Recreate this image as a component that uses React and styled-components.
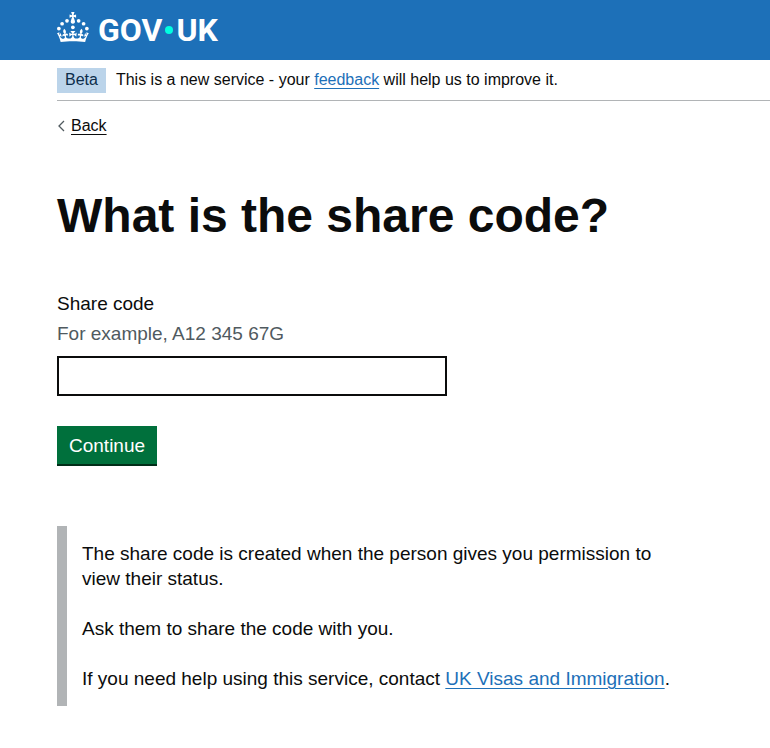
import React, { useState } from "react";
import styled, { createGlobalStyle } from "styled-components";

const GlobalStyle = createGlobalStyle`
  * {
    box-sizing: border-box;
  }

  body {
    margin: 0;
    background-color: #ffffff;
    color: #0b0c0c;
    font-family: "Liberation Sans", Arial, sans-serif;
    font-size: 19px;
    line-height: 25px;
  }
`;

const Header = styled.header`
  display: flex;
  background-color: #1d70b8;
  padding: 12px 57px 18px;
`;

const HomeLink = styled.a`
  display: flex;
  align-items: center;
  height: 30px;
  color: white;
  text-decoration: none;
`;

const Crown = styled.svg`
  width: 32px;
  height: 30px;
  margin-right: 9px;
  fill: currentColor;
`;

const LogoText = styled.span`
  font-family: Roboto, "Liberation Sans", sans-serif;
  font-size: 32px;
  font-weight: 700;
  line-height: 36px;
  padding-top: 6px;
`;

const LogoDot = styled.span`
  width: 8px;
  height: 8px;
  margin: 6px 3px 0;
  border-radius: 50%;
  background-color: #00ffe0;
`;

const Container = styled.div`
  padding-left: 57px;
`;

const PhaseBanner = styled.div`
  display: flex;
  align-items: flex-start;
  padding: 8px 0 7px;
  border-bottom: 1px solid #b1b4b6;
  font-size: 16px;
  line-height: 23px;
`;

const Tag = styled.strong`
  padding: 0 8px 2px;
  margin-right: 10px;
  background-color: #bbd4ea;
  color: #0c2d4a;
  font-weight: 400;
`;

const Link = styled.a`
  color: #1d70b8;
  text-decoration: underline;
  text-decoration-thickness: 1px;
  text-underline-offset: 3px;
`;

const BackLink = styled.a`
  display: inline-flex;
  align-items: center;
  margin-top: 12px;
  color: #0b0c0c;
  font-size: 16px;
  text-decoration: none;
`;

const Chevron = styled.svg`
  width: 8px;
  height: 12px;
  margin-right: 6px;
  fill: none;
  stroke: #505a5f;
  stroke-width: 1.3;
`;

const BackText = styled.span`
  text-decoration: underline;
  text-decoration-thickness: 1px;
  text-underline-offset: 3px;
`;

const Main = styled.main`
  max-width: 630px;
  padding: 53px 0 40px;
`;

const Title = styled.h1`
  margin: 0 0 50px;
  font-size: 48px;
  font-weight: 700;
  line-height: 50px;
`;

const Label = styled.label`
  display: block;
  margin-bottom: 5px;
`;

const Hint = styled.div`
  margin-bottom: 10px;
  color: #505a5f;
`;

const Input = styled.input`
  display: block;
  width: 100%;
  max-width: 390px;
  height: 40px;
  margin-bottom: 30px;
  padding: 5px;
  border: 2px solid #0b0c0c;
  border-radius: 0;
  font: inherit;
`;

const Button = styled.button`
  display: block;
  height: 38px;
  padding: 0 12px;
  border: none;
  background-color: #00703c;
  box-shadow: 0 2px 0 #002d18;
  color: white;
  font: inherit;
  cursor: pointer;
`;

const InsetText = styled.div`
  margin-top: 62px;
  padding: 15px;
  border-left: 10px solid #b1b4b6;
`;

const Paragraph = styled.p`
  margin: 0;

  & + & {
    margin-top: 25px;
  }
`;

const Logo = () => (
  <HomeLink href="#" aria-label="GOV.UK">
    <Crown viewBox="0 0 64 60" aria-hidden="true">
      <circle cx="20" cy="17.6" r="3.7" />
      <circle cx="10.2" cy="23.5" r="3.7" />
      <circle cx="3.7" cy="33.2" r="3.7" />
      <circle cx="31.7" cy="30.6" r="3.7" />
      <circle cx="43.3" cy="17.6" r="3.7" />
      <circle cx="53.2" cy="23.5" r="3.7" />
      <circle cx="59.7" cy="33.2" r="3.7" />
      <path d="M33.1,9.8c.2-.1.3-.3.5-.5l4.6,2.4v-6.8l-4.6,1.5c-.1-.2-.3-.3-.5-.5l1.9-5.9h-6.7l1.9,5.9c-.2.1-.3.3-.5.5l-4.6-1.5v6.8l4.6-2.4c.1.2.3.3.5.5l-2.6,8c-.9,2.8,1.2,5.7,4.1,5.7h0c3,0,5.1-2.9,4.1-5.7l-2.6-8ZM37,37.9s-3.4,3.8-4.1,6.1c2.2,0,4.2-.5,6.4-2.8l-.7,8.5c-2-2.8-4.4-4.1-5.7-3.8.1,3.1.5,6.7,5.8,7.2,3.7.3,6.7-1.5,7-3.8.4-2.6-2-4.3-3.7-1.6-1.4-4.5,2.4-6.1,4.9-3.2-1.9-4.5-1.8-7.7,2.4-10.9,3,4,2.6,7.3-1.2,11.1,2.4-1.3,6.2,0,4,4.6-1.2-2.8-3.7-2.2-4.2.2-.3,1.7.7,3.7,3,4.2,1.9.3,4.7-.9,7-5.9-1.3,0-2.4.7-3.9,1.7l2.4-8c.6,2.3,1.4,3.7,2.2,4.5.6-1.6.5-2.8,0-5.3l5,1.8c-2.6,3.6-5.2,8.7-7.3,17.5-7.4-1.1-15.7-1.7-24.5-1.7h0c-8.8,0-17.1.6-24.5,1.7-2.1-8.9-4.7-13.9-7.3-17.5l5-1.8c-.5,2.5-.6,3.7,0,5.3.8-.8,1.6-2.3,2.2-4.5l2.4,8c-1.5-1-2.6-1.7-3.9-1.7,2.3,5,5.2,6.2,7,5.9,2.3-.4,3.3-2.4,3-4.2-.5-2.4-3-3.1-4.2-.2-2.2-4.6,1.6-6,4-4.6-3.7-3.7-4.2-7.1-1.2-11.1,4.2,3.2,4.3,6.4,2.4,10.9,2.5-2.8,6.3-1.3,4.9,3.2-1.8-2.7-4.1-1-3.7,1.6.3,2.3,3.3,4.1,7,3.8,5.4-.5,5.7-4.2,5.8-7.2-1.3-.2-3.7,1-5.7,3.8l-.7-8.5c2.2,2.3,4.2,2.7,6.4,2.8-.7-2.3-4.1-6.1-4.1-6.1h10.6Z" />
    </Crown>
    <LogoText>GOV</LogoText>
    <LogoDot />
    <LogoText>UK</LogoText>
  </HomeLink>
);

const App = () => {
  const [shareCode, setShareCode] = useState("");

  return (
    <>
      <GlobalStyle />
      <Header>
        <Logo />
      </Header>
      <Container>
        <PhaseBanner>
          <Tag>Beta</Tag>
          <span>
            This is a new service - your <Link href="#">feedback</Link> will
            help us to improve it.
          </span>
        </PhaseBanner>
        <BackLink href="#">
          <Chevron viewBox="0 0 8 12" aria-hidden="true">
            <path d="M7 1L2 6l5 5" />
          </Chevron>
          <BackText>Back</BackText>
        </BackLink>
        <Main>
          <Title>What is the share code?</Title>
          <form onSubmit={(e) => e.preventDefault()}>
            <Label htmlFor="share-code">Share code</Label>
            <Hint id="share-code-hint">For example, A12 345 67G</Hint>
            <Input
              id="share-code"
              type="text"
              aria-describedby="share-code-hint"
              value={shareCode}
              onChange={(e) => setShareCode(e.target.value)}
            />
            <Button type="submit">Continue</Button>
          </form>
          <InsetText>
            <Paragraph>
              The share code is created when the person gives you permission to
              view their status.
            </Paragraph>
            <Paragraph>Ask them to share the code with you.</Paragraph>
            <Paragraph>
              If you need help using this service, contact{" "}
              <Link href="#">UK Visas and Immigration</Link>.
            </Paragraph>
          </InsetText>
        </Main>
      </Container>
    </>
  );
};

export default App;
